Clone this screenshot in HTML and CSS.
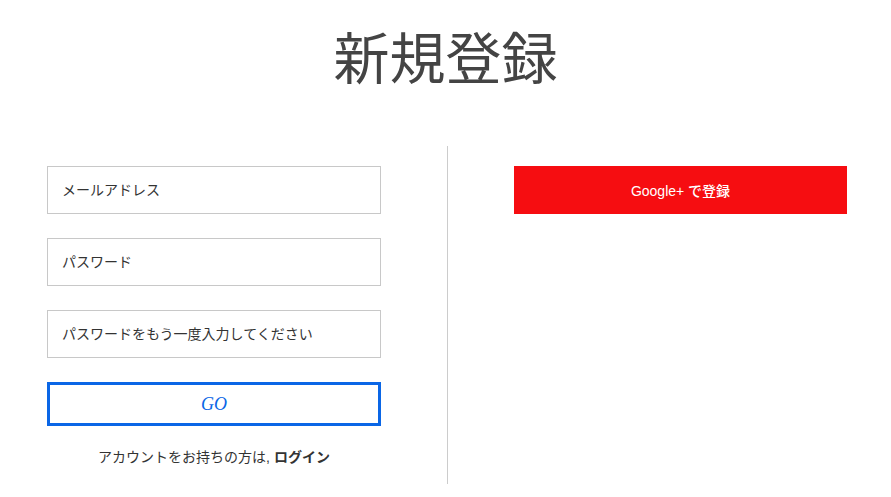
FILE: index.html
```html
<!DOCTYPE html>
<html lang="ja">
<head>
    <meta charset="UTF-8">
    <title>新規登録</title>
    <link rel="stylesheet" href="styles.css">
</head>
<body>
    <h1 class="title">新規登録</h1>
    <div class="signup">
        <form class="signup-form">
            <input type="email" class="field" placeholder="メールアドレス">
            <input type="password" class="field" placeholder="パスワード">
            <input type="password" class="field" placeholder="パスワードをもう一度入力してください">
            <button type="submit" class="go-button">GO</button>
            <p class="login-note">アカウントをお持ちの方は, <a href="#" class="login-link">ログイン</a></p>
        </form>
        <div class="social">
            <button type="button" class="google-button">Google+ で登録</button>
        </div>
    </div>
</body>
</html>
```

FILE: styles.css
```css
body {
    margin: 0;
    font-family: "Liberation Sans", "Noto Sans CJK JP", sans-serif;
    color: #333;
    background-color: #fff;
}
.title {
    margin: 0;
    padding-top: 15px;
    height: 80px;
    line-height: 80px;
    font-family: "Noto Sans CJK JP", sans-serif;
    font-size: 56px;
    font-weight: normal;
    color: #444;
    text-align: center;
}
.signup {
    display: flex;
    margin-top: 51px;
    padding: 0 44px 0 47px;
}
.signup-form {
    display: flex;
    flex-direction: column;
    width: 334px;
    padding: 20px 66px 17px 0;
    border-right: 1px solid #ccc;
}
.field {
    box-sizing: border-box;
    height: 48px;
    margin: 0 0 24px 0;
    padding: 0 14px;
    border: 1px solid #c8c8c8;
    border-radius: 0;
    font-family: "Liberation Sans", "Noto Sans CJK JP", sans-serif;
    font-size: 14px;
    color: #333;
}
.field::placeholder {
    color: #333;
}
.go-button {
    box-sizing: border-box;
    height: 44px;
    border: 3px solid #0a66e6;
    background-color: #fff;
    color: #0a66e6;
    font-family: "Liberation Serif", serif;
    font-style: italic;
    font-size: 18px;
    cursor: pointer;
}
.login-note {
    margin: 21px 0 0 0;
    line-height: 20px;
    font-size: 14px;
    text-align: center;
}
.login-link {
    color: #333;
    font-weight: bold;
    text-decoration: none;
}
.social {
    flex: 1;
    padding: 20px 0 0 66px;
}
.google-button {
    width: 100%;
    height: 48px;
    border: none;
    background-color: #f60d11;
    color: #fff;
    font-family: "Liberation Sans", "Noto Sans CJK JP", sans-serif;
    font-size: 14px;
    font-weight: 500;
    cursor: pointer;
}
```
